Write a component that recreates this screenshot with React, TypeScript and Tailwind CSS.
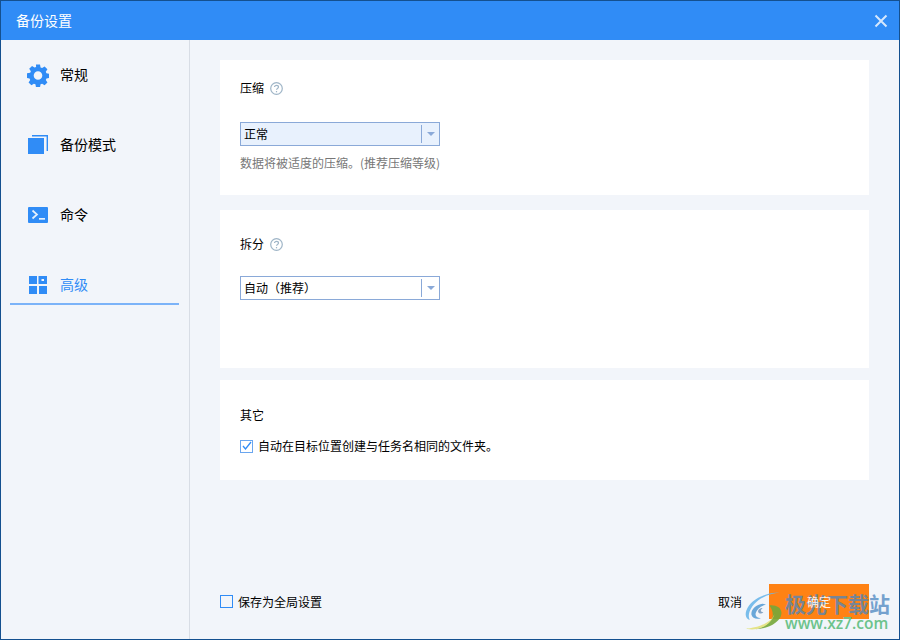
import React from "react";

const font = { fontFamily: '"Noto Sans CJK SC", sans-serif' };

function Help() {
  return (
    <svg width="13" height="13" viewBox="0 0 13 13" className="ml-[6px]">
      <circle cx="6.5" cy="6.5" r="5.8" fill="none" stroke="#9fb5c7" strokeWidth="1.2" />
      <path d="M4.500 5.100c0-1 .9-1.800 2-1.800s2 .7 2 1.700c0 1.400-2 1.400-2 2.800" fill="none" stroke="#9fb5c7" strokeWidth="1.200" />
      <rect x="5.900" y="9" width="1.200" height="1.300" fill="#9fb5c7" />
    </svg>
  );
}

function Select({ label, active }: { label: string; active?: boolean }) {
  return (
    <div className={`flex h-[24px] w-[200px] items-center border border-[#8aa9d8] pl-[3px] ${active ? "bg-[#e8f1fd]" : "bg-white"}`}>
      <span className="flex-1 text-[12px] leading-none text-black">{label}</span>
      <div className="flex h-[18px] w-[18px] items-center justify-center border-l border-[#8aa9d8]">
        <div className="ml-[1px] h-0 w-0 border-x-[4px] border-t-[4px] border-x-transparent border-t-[#8aa9d8]" />
      </div>
    </div>
  );
}

function NavItem({ icon, label, active }: { icon: React.ReactNode; label: string; active?: boolean }) {
  return (
    <div className="flex h-[70px] flex-col">
      <div className={`ml-[9px] mr-[10px] flex items-center pl-[17px] ${active ? "mt-[15px] h-[40px] border-b-2 border-[#7cb3f8] pt-[2px]" : "h-[70px]"}`}>
        <div className="flex w-[22px] items-center justify-center">{icon}</div>
        <span className={`-mt-[2px] ml-[11px] text-[14px] leading-none ${active ? "text-[#308cf6]" : "text-black"}`}>{label}</span>
      </div>
    </div>
  );
}

const Gear = (
  <svg width="23" height="23" viewBox="0 0 24 24">
    <path
      fill="#308cf6"
      fillRule="evenodd"
      d="M9.800 0h4.400l.6 3.200 1.700.7 2.700-1.800 3.100 3.100-1.800 2.700.7 1.700 3.200.6v4.400l-3.200.6-.7 1.700 1.800 2.700-3.100 3.100-2.700-1.800-1.700.7-.6 3.200H9.800l-.6-3.200-1.700-.7-2.700 1.800-3.100-3.100 1.800-2.700-.7-1.700-3.200-.6V9.600L3.500 9l.7-1.700-1.800-2.700 3.100-3.100 2.700 1.800 1.700-.7zM12 7.300a4.700 4.700 0 1 0 0 9.400 4.700 4.700 0 0 0 0-9.400z"
    />
  </svg>
);

const Copy = (
  <svg width="20" height="20" viewBox="0 0 20 20">
    <rect x="0" y="3" width="16" height="16" fill="#308cf6" />
    <path d="M4 .7h15.300V16" fill="none" stroke="#308cf6" strokeWidth="1.400" />
  </svg>
);

const Terminal = (
  <svg width="20" height="16" viewBox="0 0 20 16">
    <rect width="20" height="16" rx="1" fill="#308cf6" />
    <path d="M4.500 3.500 9 7.500l-4.500 4" fill="none" stroke="#e6f0fd" strokeWidth="1.700" />
    <rect x="11" y="11" width="6" height="1.700" fill="#e6f0fd" />
  </svg>
);

const Grid = (
  <svg width="18" height="18" viewBox="0 0 18 18">
    <rect x="0" y="0" width="8" height="8" fill="#308cf6" />
    <rect x="11" y="1.500" width="5.500" height="5" fill="none" stroke="#308cf6" strokeWidth="3" />
    <rect x="0" y="10" width="8" height="8" fill="#308cf6" />
    <rect x="10" y="10" width="8" height="8" fill="#308cf6" />
  </svg>
);

function Watermark() {
  return (
    <div className="pointer-events-none absolute left-[741px] top-[589px] flex h-[42px] w-[150px] items-start">
      <svg width="42" height="41" viewBox="0 0 45 48" className="shrink-0 opacity-90">
        <path d="M42 3C26 3 8 10 3 24c-2 6 0 10 4 11C3 28 10 16 20 10 27 6 35 4 42 3z" fill="#6cb7ea" />
        <path d="M22 16c-8 1-14 7-13 13 1 4 6 6 11 4-5 0-7-3-6-6 1-4 5-8 12-10z" fill="#5b9fd6" />
        <path d="M22 21c-4 0-6 3-5 5 1 2 4 2 6 0-2 0-3-1-3-2s1-2 2-3z" fill="#7a9cc0" />
        <path d="M30 18c8-1 15 3 14 10-1 9-14 17-30 18 10-3 20-9 20-17 0-5-2-8-4-11z" fill="#75a83a" />
        <path d="M36 28c-3 8-14 15-30 17-2 0-4 0-5-1 4 3 12 3 20 0 7-3 13-9 15-16z" fill="#e4e27c" />
      </svg>
      <div className="ml-[1px] flex flex-col" style={font}>
        <span className="whitespace-nowrap text-[21px] font-bold leading-[26px] text-[#4a86c0] opacity-75">极光下载站</span>
        <span className="whitespace-nowrap text-[15.500px] font-semibold leading-[15px] text-[#6cc38b]" style={{ fontFamily: '"Open Sans", sans-serif' }}>www.xz7.com</span>
      </div>
    </div>
  );
}

export default function App() {
  return (
    <div className="relative flex h-[640px] w-[900px] flex-col border border-[#14508f] bg-[#f2f5fa]" style={font}>
      <div className="flex h-[39px] shrink-0 items-center justify-between bg-[#308cf6] pl-[15px] pr-[11px]">
        <span className="-mt-[2px] text-[14px] leading-none text-white">备份设置</span>
        <svg width="14" height="14" viewBox="0 0 14 14">
          <path d="M1.500 1.500l11 11M12.500 1.500l-11 11" stroke="#d5e7fd" strokeWidth="2" />
        </svg>
      </div>
      <div className="flex flex-1">
        <div className="w-[189px] shrink-0 border-r border-[#d8dde5]">
          <NavItem icon={Gear} label="常规" />
          <NavItem icon={Copy} label="备份模式" />
          <NavItem icon={Terminal} label="命令" />
          <NavItem icon={Grid} label="高级" active />
        </div>
        <div className="flex flex-1 flex-col pl-[30px] pr-[30px] pt-[20px]">
          <div className="h-[135px] bg-white pl-[20px] pt-[20px]">
            <div className="flex h-[16px] items-center text-[12px] text-black">压缩<Help /></div>
            <div className="mt-[26px]"><Select label="正常" active /></div>
            <div className="mt-[9px] text-[12px] leading-[16px] text-[#777]">数据将被适度的压缩。(推荐压缩等级)</div>
          </div>
          <div className="mt-[15px] h-[158px] bg-white pl-[20px] pt-[26px]">
            <div className="flex h-[16px] items-center text-[12px] text-black">拆分<Help /></div>
            <div className="mt-[24px]"><Select label="自动（推荐）" /></div>
          </div>
          <div className="mt-[12px] h-[100px] bg-white pl-[20px] pt-[27px]">
            <div className="h-[16px] text-[12px] leading-[16px] text-black">其它</div>
            <div className="mt-[15px] flex h-[16px] items-center">
              <svg width="13" height="13" viewBox="0 0 13 13" className="shrink-0">
                <rect x="0.500" y="0.500" width="12" height="12" fill="none" stroke="#6aa6ef" />
                <path d="M3 6 5.500 9 11 2" fill="none" stroke="#308cf6" strokeWidth="1.300" />
              </svg>
              <span className="ml-[5px] text-[12px] leading-none text-black">自动在目标位置创建与任务名相同的文件夹。</span>
            </div>
          </div>
          <div className="mb-[20px] mt-auto flex items-center">
            <div className="h-[13px] w-[13px] border border-[#308cf6]" />
            <span className="ml-[5px] text-[12px] leading-none text-black">保存为全局设置</span>
            <span className="ml-auto text-[12px] leading-none text-black">取消</span>
            <div className="ml-[27px] flex h-[35px] w-[100px] items-center justify-center bg-[#ff8214] text-[12px] text-white">
              <span className="relative z-10 opacity-90">确定</span>
            </div>
          </div>
        </div>
      </div>
      <Watermark />
    </div>
  );
}
